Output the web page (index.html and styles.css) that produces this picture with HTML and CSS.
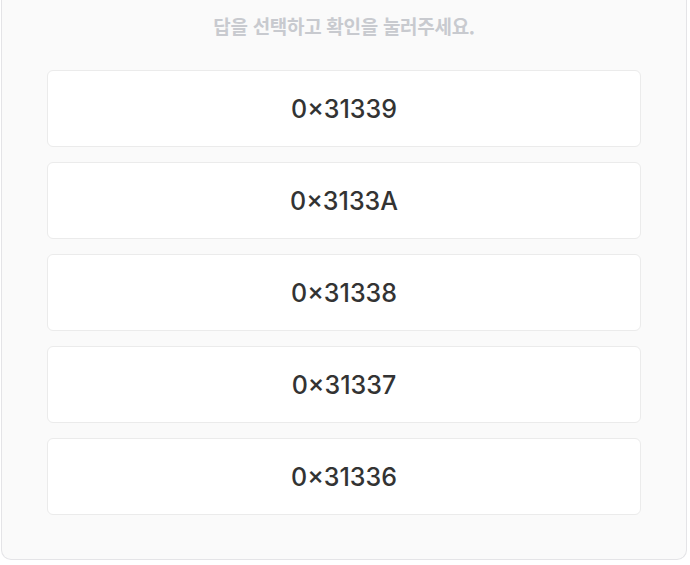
FILE: index.html
```html
<!DOCTYPE html>
<html lang="ko">
<head>
<meta charset="utf-8">
<link rel="stylesheet" href="styles.css">
</head>
<body>
<div class="panel">
  <p class="hint">답을 선택하고 확인을 눌러주세요.</p>
  <div class="options">
    <button class="option">0×31339</button>
    <button class="option">0×3133A</button>
    <button class="option">0×31338</button>
    <button class="option">0×31337</button>
    <button class="option">0×31336</button>
  </div>
</div>
</body>
</html>
```
FILE: styles.css
```css
html, body {
  margin: 0;
  padding: 0;
  background: #ffffff;
}
body {
  font-family: Inter, "Noto Sans CJK KR", sans-serif;
}
.panel {
  margin: 0 3px 0 1px;
  background: #fafafa;
  border: 1px solid #e4e4e7;
  border-top: none;
  border-radius: 0 0 10px 10px;
  padding: 0 45px 44px 45px;
}
.hint {
  margin: 0;
  padding-top: 14px;
  height: 24px;
  line-height: 24px;
  text-align: center;
  font-family: "Noto Sans CJK KR", sans-serif;
  font-size: 19px;
  font-weight: 700;
  color: #c8cacf;
  letter-spacing: -0.3px;
  margin-bottom: 32px;
}
.options {
  display: flex;
  flex-direction: column;
  gap: 15px;
}
.option {
  height: 77px;
  background: #ffffff;
  border: 1px solid #ebebeb;
  border-radius: 6px;
  font-family: Inter, sans-serif;
  font-size: 25px;
  font-weight: 450;
  color: #333333;
  text-align: center;
  padding: 0;
}
```
